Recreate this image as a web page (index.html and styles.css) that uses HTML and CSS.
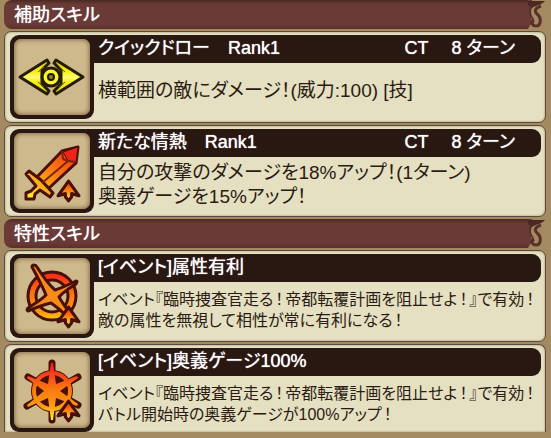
FILE: index.html
```html
<!DOCTYPE html>
<html lang="ja">
<head>
<meta charset="utf-8">
<meta name="viewport" content="width=device-width, initial-scale=1">
<title>スキル</title>
<link rel="stylesheet" href="styles.css">
</head>
<body>
<svg class="defs" aria-hidden="true">
  <defs>
    <linearGradient id="fire" x1="0" y1="0" x2="0" y2="1"><stop offset="0" stop-color="#fb2414"/><stop offset=".5" stop-color="#fb8712"/><stop offset="1" stop-color="#fff22a"/></linearGradient>
    <linearGradient id="fireUser" gradientUnits="userSpaceOnUse" x1="0" y1="12" x2="0" y2="68"><stop offset="0" stop-color="#fb1a1a"/><stop offset=".45" stop-color="#f87a10"/><stop offset=".75" stop-color="#fb9a14"/><stop offset="1" stop-color="#fff420"/></linearGradient>
    <linearGradient id="blade" gradientUnits="userSpaceOnUse" x1="64" y1="14" x2="14" y2="64"><stop offset="0" stop-color="#f42812"/><stop offset=".45" stop-color="#fb7410"/><stop offset=".8" stop-color="#fdb61c"/><stop offset="1" stop-color="#fff42c"/></linearGradient>
    <linearGradient id="wing" gradientUnits="userSpaceOnUse" x1="0" y1="24" x2="0" y2="52"><stop offset="0" stop-color="#ddd30a"/><stop offset=".35" stop-color="#f8f01c"/><stop offset=".5" stop-color="#fdfa78"/><stop offset=".65" stop-color="#f8f01c"/><stop offset="1" stop-color="#ddd30a"/></linearGradient>
    <symbol id="up" viewBox="0 0 24 24">
      <path d="M12 3 22 17 15 15V18L12 22 9 18V15L2 17Z" fill="url(#fire)" stroke="#481006" stroke-width="3" stroke-linejoin="round"/>
    </symbol>
    <symbol id="flourish" viewBox="0 0 18 29">
      <path d="M0 0H4L5 5 3 10 3 18 4 22 0 29Z" fill="#693a36"/>
      <path d="M0 1H17C14 5 8 5 4 8L0 5Z" fill="#4b2823"/>
      <path d="M13 6C7 8 6 11 9 14C14 18 13 26 8 26C4 26 3 22 6 20" fill="none" stroke="#5b302a" stroke-width="3"/>
      <path d="M2 6C4 10 0 12 3 16S6 20 2 24" fill="none" stroke="#5b302a" stroke-width="2"/>
    </symbol>
  </defs>
</svg>

<main class="skills">
  <section class="group">
    <h2 class="group-title"><span>補助スキル</span><svg class="flourish" aria-hidden="true"><use href="#flourish"/></svg></h2>

    <article class="card">
      <div class="icon">
        <svg viewBox="0 0 76 76" aria-hidden="true">
          <g stroke="#241c07" stroke-width="3" stroke-linejoin="round" fill="url(#wing)">
            <path d="M6 38 33 21 35 24 28 31V45L35 52 33 55Z"/>
            <path d="M69 38 42 21 40 24 47 31V45L40 52 42 55Z"/>
          </g>
          <path d="M24 33 30 28M24 43 30 48M51 33 45 28M51 43 45 48" stroke="#625a0b" stroke-width="1"/>
          <circle cx="37" cy="38" r="9" fill="#fbf32c" stroke="#241c07" stroke-width="3"/>
          <circle cx="37" cy="38" r="3" fill="#8b8521" stroke="#201a06" stroke-width="2"/>
        </svg>
      </div>
      <div class="info">
        <h3 class="name"><span>クイックドロー　Rank1</span><span class="turns"><span>CT</span><span>8 ターン</span></span></h3>
        <p class="text">横範囲の敵にダメージ！(威力:100) [技]</p>
      </div>
    </article>

    <article class="card">
      <div class="icon">
        <svg viewBox="0 0 76 76" aria-hidden="true">
          <g stroke="#481006" stroke-width="3" stroke-linejoin="round">
            <path d="M22 45 48 18 64 14 62 30 34 56Z" fill="url(#blade)"/>
            <path d="M12 60 17 58 22 53 12 41 15 38 27 47 39 60 36 64 26 57 21 61 20 66 12 66Z" fill="url(#blade)"/>
            <path d="M49 19 64 14 62 29 54 28Z" fill="#f02416" stroke-width="1"/>
            <path d="M48 18 49 26 54 28 62 29M54 28 28 50" fill="none" stroke="#7a2408" stroke-width="2"/>
          </g>
          <use href="#up" x="42" y="45" width="25" height="25"/>
        </svg>
      </div>
      <div class="info">
        <h3 class="name"><span>新たな情熱　Rank1</span><span class="turns"><span>CT</span><span>8 ターン</span></span></h3>
        <p class="text">自分の攻撃のダメージを18%アップ！(1ターン)<br>奥義ゲージを15%アップ！</p>
      </div>
    </article>
  </section>

  <section class="group">
    <h2 class="group-title"><span>特性スキル</span><svg class="flourish" aria-hidden="true"><use href="#flourish"/></svg></h2>

    <article class="card">
      <div class="icon">
        <svg viewBox="0 0 76 76" aria-hidden="true">
          <circle cx="38" cy="38" r="20" fill="none" stroke="#481006" stroke-width="11"/>
          <circle cx="38" cy="38" r="20" fill="none" stroke="url(#fireUser)" stroke-width="5"/>
          <path d="M20 7Q22 7 23 9Q33 25 41 32Q50 29 62 23Q64 23 62 26Q49 34 45 39Q49 46 58 58L55 60Q43 49 37 45Q28 47 14 53Q12 52 14 50Q27 42 32 37Q27 25 18 9Q18 7 20 7Z" fill="#f98b18" stroke="#481006" stroke-width="3" stroke-linejoin="round"/>
          <use href="#up" x="42" y="46" width="25" height="25"/>
        </svg>
      </div>
      <div class="info">
        <h3 class="name"><span>[イベント]属性有利</span></h3>
        <p class="text small">イベント『臨時捜査官走る<span class="mark">！</span>帝都転覆計画を阻止せよ<span class="mark">！</span>』で有効<span class="mark">！</span><br>敵の属性を無視して相性が常に有利になる<span class="mark">！</span></p>
      </div>
    </article>

    <article class="card">
      <div class="icon">
        <svg viewBox="0 0 76 76" aria-hidden="true">
          <circle cx="38" cy="39" r="21" fill="#481006"/>
          <path d="M38 11V68M14 25 64 53M13 54 64 25" fill="none" stroke="#481006" stroke-width="7" stroke-linecap="round"/>
          <circle cx="38" cy="39" r="18" fill="none" stroke="url(#fireUser)" stroke-width="4"/>
          <path d="M37 11H39L42 32 63 24 64 26 46 39 64 52 63 54 42 46 39 68H37L34 46 14 55 13 53 30 39 13 26 14 24 34 32Z" fill="url(#fireUser)"/>
          <use href="#up" x="42" y="46" width="25" height="25"/>
        </svg>
      </div>
      <div class="info">
        <h3 class="name"><span>[イベント]奥義ゲージ100%</span></h3>
        <p class="text small">イベント『臨時捜査官走る<span class="mark">！</span>帝都転覆計画を阻止せよ<span class="mark">！</span>』で有効<span class="mark">！</span><br>バトル開始時の奥義ゲージが100%アップ<span class="mark">！</span></p>
      </div>
    </article>
  </section>
</main>
</body>
</html>
```
FILE: styles.css
```css
* { box-sizing: border-box; }

body {
  margin: 0;
  background: #a48a60;
  color: #2c1b12;
  font-family: "Liberation Sans", "Noto Sans CJK JP", sans-serif;
  font-feature-settings: "palt";
}

h2, h3, p { margin: 0; font-weight: 400; }

.defs { position: absolute; width: 0; height: 0; }

.skills {
  display: flex;
  flex-direction: column;
  gap: 2px;
  padding: 0 5px 6px 4px;
}

.group {
  display: flex;
  flex-direction: column;
  gap: 2px;
}

.group-title {
  display: flex;
  align-items: center;
  justify-content: space-between;
  height: 29px;
  padding-left: 10px;
  color: #fff;
  font-size: 18px;
  line-height: 28px;
  text-shadow: 0 0 1px #fff;
  background: linear-gradient(#4b2823, #693a36 4px, #693a36 24px, #5b302c) no-repeat 0 0 / calc(100% - 18px) 100%;
  border-radius: 8px 0 0 8px;
}

.flourish { width: 18px; height: 29px; }

.card {
  display: flex;
  min-height: 92px;
  padding: 3px 4px 3px 5px;
  background: #e4e0c1;
  border: 1px solid #5c4a3b;
  border-radius: 7px;
  box-shadow: inset 0 0 2px #8a7a60;
}

.group:last-child .card:last-child {
  min-height: 88px;
  padding-bottom: 0;
  border-bottom: 0;
  border-radius: 7px 7px 0 0;
}

.icon {
  flex: none;
  z-index: 1;
  width: 84px;
  height: 84px;
  padding: 4px;
  background: #291711;
  border-radius: 9px;
}

.icon svg {
  display: block;
  width: 76px;
  height: 76px;
  background: #cdb98c;
  border-radius: 7px;
  box-shadow: inset 0 0 4px 1px #8c6c4b;
}

.info { flex: 1; display: flex; flex-direction: column; }

.name {
  display: flex;
  justify-content: space-between;
  height: 28px;
  margin-left: -8px;
  padding: 0 26px 0 12px;
  color: #fff;
  font-size: 18px;
  line-height: 27px;
  text-shadow: 0 0 1px #fff;
  background: #291711;
  border-radius: 0 9px 9px 0;
}

.turns { display: flex; gap: 23px; }

.text {
  flex: 1;
  display: flow-root;
  align-content: center;
  padding-left: 4px;
  font-size: 19px;
  line-height: 24px;
}

.small { font-size: 16px; line-height: 21px; }

.mark { padding: 0 2px; }
```
